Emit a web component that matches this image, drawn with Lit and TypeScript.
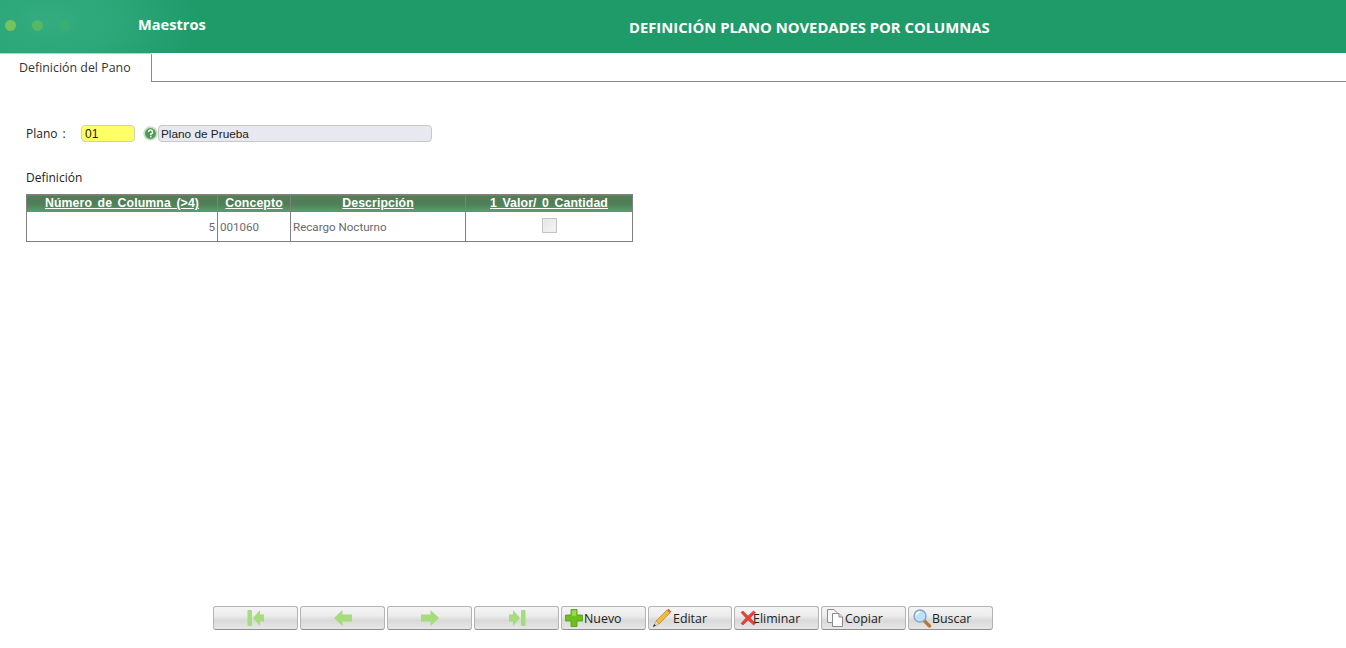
import { LitElement, html, css, svg } from "lit";
import { customElement } from "lit/decorators.js";

const icons: Record<string, unknown> = {
  first: svg`<rect x="1.5" y="2" width="4.5" height="16" rx="1" fill="#a5dc7c"/><path d="M7 10 L14 2 V6.5 H18 V13.5 H14 V18 Z" fill="#a5dc7c"/>`,
  prev: svg`<path d="M1 10 L9.5 2 V6.5 H19 V13.5 H9.5 V18 Z" fill="#a5dc7c"/>`,
  next: svg`<path d="M19 10 L10.5 2 V6.5 H1 V13.5 H10.5 V18 Z" fill="#a5dc7c"/>`,
  last: svg`<rect x="14" y="2" width="4.5" height="16" rx="1" fill="#a5dc7c"/><path d="M13 10 L6 2 V6.5 H2 V13.5 H6 V18 Z" fill="#a5dc7c"/>`,
  plus: svg`<path d="M7 1.5 H13 V7 H18.5 V13 H13 V18.5 H7 V13 H1.5 V7 H7 Z" fill="#6cc01e" stroke="#4f9a14" stroke-width="0.8"/><path d="M7.8 2.4 H12.2 V7.8 H7.8 Z" fill="#96dc4c"/>`,
  pencil: svg`<path d="M4 13 L15 2 L18 5 L7 16 Z" fill="#f2b840" stroke="#b8802a" stroke-width="0.7"/><path d="M15 2 L16.5 .8 L19.2 3.5 L18 5 Z" fill="#e8604a"/><path d="M4 13 L7 16 L1 19 Z" fill="#f3dcb4" stroke="#a5835a" stroke-width="0.5"/><path d="M1 19 L2.2 16 L4 17.6 Z" fill="#333"/>`,
  cross: svg`<path d="M3 4.5 L5 3 L10 8 L15.5 3 L17.5 4.5 L12.2 10 L17.5 15.5 L15.5 17 L10 12 L5 17 L3 15.5 L8 10 Z" fill="#e8413c" stroke="#c22" stroke-width="0.5"/>`,
  copy: svg`<path d="M2.5 1.5 H9 L12 4.5 V14.5 H2.5 Z" fill="#f6f6f6" stroke="#8c8c8c"/><path d="M7.5 5.5 H14 L17.5 9 V18.5 H7.5 Z" fill="#fff" stroke="#8c8c8c"/><path d="M14 5.5 V9 H17.5" fill="#dcdcdc" stroke="#8c8c8c"/>`,
  search: svg`<path d="M11.5 12 L17.5 18" stroke="#b87a32" stroke-width="3.4" stroke-linecap="round"/><circle cx="8" cy="8" r="6" fill="#bfe0f6" stroke="#7fa8c8" stroke-width="1.4"/><path d="M4.5 7 A4 4 0 0 1 8 4" stroke="#fff" stroke-width="1.4" fill="none"/>`,
};

const buttons = [
  { icon: "first", w: 85 },
  { icon: "prev", w: 85 },
  { icon: "next", w: 85 },
  { icon: "last", w: 85 },
  { icon: "plus", label: "Nuevo", w: 85, pad: 2, after: 0 },
  { icon: "pencil", label: "Editar", w: 84, pad: 3, after: 1 },
  { icon: "cross", label: "Eliminar", w: 85, pad: 3, after: -5 },
  { icon: "copy", label: "Copiar", w: 85, pad: 3, after: 0 },
  { icon: "search", label: "Buscar", w: 85, pad: 3, after: 0 },
];

@customElement("app-root")
export class AppRoot extends LitElement {
  static styles = css`
    :host {
      display: flex;
      flex-direction: column;
      height: 648px;
      overflow: hidden;
      background: #fff;
      font-family: "Open Sans", "Noto Sans", sans-serif;
      color: #222;
    }
    .top {
      height: 53px;
      flex: none;
      display: flex;
      background: radial-gradient(ellipse 150px 80px at 50px 20px, #34ac80 0%, #2ba779 45%, #1f9b6a 100%), #1f9b6a;
    }
    .dots {
      width: 138px;
      flex: none;
      display: flex;
      gap: 16px;
      padding: 19.5px 0 0 5px;
      box-sizing: border-box;
    }
    .dot {
      width: 11px;
      height: 11px;
      border-radius: 50%;
    }
    .brand {
      width: 200px;
      flex: none;
      color: #fff;
      font-size: 14.6px;
      font-weight: 700;
      line-height: 49px;
    }
    .title {
      flex: 1;
      color: #fff;
      font-size: 14.8px;
      font-weight: 700;
      line-height: 54px;
      padding-left: 291px;
      white-space: nowrap;
    }
    .tabs {
      height: 29px;
      flex: none;
      box-sizing: border-box;
      border-bottom: 1px solid #8a8a8a;
      display: flex;
    }
    .tab {
      width: 152px;
      height: 29px;
      box-sizing: border-box;
      background: #fff;
      border-top: 1px solid #c8c8c8;
      border-right: 1px solid #8a8a8a;
      border-top-right-radius: 2px;
      padding-left: 19px;
      font-size: 12.4px;
      line-height: 28px;
      color: #333;
    }
    .content {
      flex: 1;
      display: flex;
      flex-direction: column;
      padding: 43px 0 0 26px;
      min-height: 0;
    }
    .row {
      display: flex;
      align-items: center;
      height: 17px;
    }
    .lbl {
      width: 55px;
      font-size: 12px;
      line-height: 17px;
      word-spacing: 2px;
      color: #222;
    }
    .code {
      width: 54px;
      height: 17px;
      box-sizing: border-box;
      background: #ffff66;
      border: 1px solid #d0d0b8;
      border-radius: 4px;
      font: 12px/16px "Liberation Sans", Arial, sans-serif;
      padding-left: 3px;
      color: #222;
    }
    .help {
      margin: 0 0 0 8px;
      display: block;
      flex: none;
    }
    .name {
      width: 274px;
      height: 17px;
      box-sizing: border-box;
      background: #e8e8f0;
      border: 1px solid #c8c8c8;
      border-radius: 4px;
      font: 11.8px/16px "Liberation Sans", Arial, sans-serif;
      padding-left: 2px;
      color: #222;
    }
    .sec {
      margin-top: 27px;
      font-size: 12px;
      line-height: 17px;
      height: 17px;
      color: #222;
    }
    table {
      margin-top: 8px;
      width: 606px;
      border-collapse: collapse;
      table-layout: fixed;
    }
    th {
      height: 16px;
      padding: 0;
      background: linear-gradient(#4f7f57 0%, #4f7f57 55%, #57a06c 100%);
      border: 1px solid #808080;
      border-bottom: 0;
      color: #fff;
      font: 700 12.3px/16px "Liberation Sans", Tahoma, sans-serif;
      word-spacing: 2px;
      letter-spacing: 0.1px;
      text-decoration: underline;
    }
    td {
      height: 29px;
      padding: 1px 2px 0;
      border: 1px solid #808080;
      font: 11.6px/28px "Roboto", Tahoma, sans-serif;
      color: #6a6a6a;
      box-sizing: border-box;
    }
    td.num {
      text-align: right;
    }
    td.chk {
      text-align: center;
    }
    .box {
      display: block;
      width: 15px;
      height: 15px;
      box-sizing: border-box;
      margin: 0 auto 4px;
      background: linear-gradient(135deg, #e4e4e4, #f6f6f6);
      border: 1px solid #c4c4c4;
      box-shadow: inset 0 0 0 1px #ededed;
    }
    .bar {
      flex: none;
      display: flex;
      gap: 2px;
      padding: 0 0 18px 213px;
    }
    .btn {
      height: 24px;
      box-sizing: border-box;
      display: flex;
      align-items: center;
      justify-content: center;
      border: 1px solid #b4b4b4;
      border-bottom-color: #8e8e8e;
      border-radius: 3px;
      background: linear-gradient(#f5f5f5 0%, #ececec 40%, #d9d9d9 60%, #e6e6e6 100%);
      font-size: 12.4px;
      color: #222;
    }
    .btn.lab {
      justify-content: flex-start;
    }
    .btn svg {
      display: block;
      flex: none;
    }
  `;

  render() {
    const cols = [191, 73, 175, 167];
    return html`
      <div class="top">
        <div class="dots">
          <span class="dot" style="background:#76c25c"></span>
          <span class="dot" style="background:#55b864"></span>
          <span class="dot" style="background:#38ae72"></span>
        </div>
        <div class="brand">Maestros</div>
        <div class="title">DEFINICIÓN PLANO NOVEDADES POR COLUMNAS</div>
      </div>
      <div class="tabs"><div class="tab">Definición del Pano</div></div>
      <div class="content">
        <div class="row">
          <span class="lbl">Plano :</span>
          <span class="code">01</span>
          <svg class="help" width="15" height="15" viewBox="0 0 15 15">
            <circle cx="7.5" cy="7.5" r="7.2" fill="#c6dfc0"/>
            <circle cx="7.5" cy="7.5" r="5.4" fill="#4f9a55"/>
            <path d="M5.5 6 A2 2 0 1 1 7.9 8 V9" stroke="#fff" stroke-width="1.4" fill="none"/>
            <rect x="7.1" y="9.8" width="1.5" height="1.5" fill="#fff"/>
          </svg>
          <span class="name">Plano de Prueba</span>
        </div>
        <div class="sec">Definición</div>
        <table>
          <colgroup>${cols.map((w) => html`<col style="width:${w}px" />`)}</colgroup>
          <tr>
            <th>Número de Columna (>4)</th>
            <th>Concepto</th>
            <th>Descripción</th>
            <th>1 Valor/ 0 Cantidad</th>
          </tr>
          <tr>
            <td class="num">5</td>
            <td>001060</td>
            <td>Recargo Nocturno</td>
            <td class="chk"><span class="box"></span></td>
          </tr>
        </table>
      </div>
      <div class="bar">
        ${buttons.map(
          (b) => html`<div
            class="btn ${b.label ? "lab" : ""}"
            style="width:${b.w}px;${b.label ? `padding-left:${b.pad}px` : ""}"
          >
            <svg style="margin-right:${b.after ?? 0}px" width="20" height="20" viewBox="0 0 20 20">${icons[b.icon]}</svg>${b.label ?? ""}
          </div>`
        )}
      </div>
    `;
  }
}
